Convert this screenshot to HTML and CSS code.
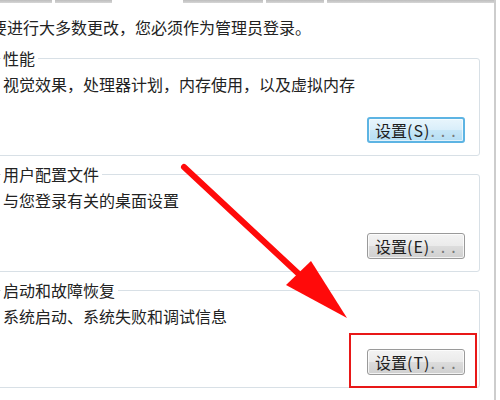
FILE: index.html
```html
<!DOCTYPE html>
<html lang="zh-CN">
<head>
<meta charset="utf-8">
<title>系统属性 - 高级</title>
<link rel="stylesheet" href="styles.css">
</head>
<body>
<div class="page">
  <div class="panel">
    <div class="tabs">
      <span class="tab w1"></span>
      <span class="tab w2"></span>
      <span class="tab sel"></span>
      <span class="tab w3"></span>
      <span class="tab w4"></span>
      <span class="tab w5"></span>
    </div>
    <p class="intro">要进行大多数更改，您必须作为管理员登录。</p>

    <fieldset class="group">
      <legend>性能</legend>
      <p class="desc">视觉效果，处理器计划，内存使用，以及虚拟内存</p>
      <div class="actions">
        <button class="btn focus">设置<span class="key">(S)</span><span class="dots">...</span></button>
      </div>
    </fieldset>

    <fieldset class="group">
      <legend>用户配置文件</legend>
      <p class="desc">与您登录有关的桌面设置</p>
      <div class="actions">
        <button class="btn">设置<span class="key">(E)</span><span class="dots">...</span></button>
      </div>
    </fieldset>

    <fieldset class="group">
      <legend>启动和故障恢复</legend>
      <p class="desc">系统启动、系统失败和调试信息</p>
      <div class="actions">
        <span class="callout"><button class="btn">设置<span class="key">(T)</span><span class="dots">...</span></button></span>
      </div>
    </fieldset>
  </div>

  <svg class="arrow" width="500" height="400" viewBox="0 0 500 400" aria-hidden="true">
    <line x1="184" y1="167" x2="302" y2="277" stroke="#ff0a0a" stroke-width="6" stroke-linecap="round"/>
    <polygon points="286,285 311,261 347,318" fill="#ff0a0a"/>
  </svg>
</div>
</body>
</html>
```

FILE: styles.css
```css
* { box-sizing: border-box; }

html, body {
  margin: 0;
  padding: 0;
  background: #ffffff;
}

.page {
  position: relative;
  width: 500px;
  height: 400px;
  overflow: hidden;
  background: #ffffff;
  font-family: "Noto Sans CJK SC", "Noto Sans", sans-serif;
  font-size: 16px;
  color: #222222;
}

.panel {
  margin-left: -10px;
  width: 506px;
  height: 400px;
  padding: 0 14px 0 0;
  border-right: 2px solid #cdcdcd;
}

.tabs {
  display: flex;
  height: 3px;
  margin: 0 -14px 0 10px;
  gap: 3px;
}

.tab {
  height: 3px;
  background: linear-gradient(#bdbdbd, #d6d6d6);
}

.tab.w1 { width: 52px; }
.tab.w2 { width: 57px; }
.tab.sel { width: 65px; background: transparent; }
.tab.w3 { width: 80px; }
.tab.w4 { width: 58px; }
.tab.w5 { flex: 1; }

.intro {
  margin: 14px 0 0 1px;
  line-height: 20px;
  white-space: nowrap;
}

.group {
  margin: 8px 0 0 0;
  min-width: 0;
  border: 1px solid #d8e0e6;
  border-radius: 3px;
  padding: 6px 14px 12px 12px;
}

.intro + .group { margin-top: 11px; }

.group legend {
  margin-left: -2px;
  padding: 0 3px 0 2px;
  line-height: 20px;
  white-space: nowrap;
}

.desc {
  margin: 0;
  line-height: 20px;
  white-space: nowrap;
}

.actions {
  display: flex;
  justify-content: flex-end;
  margin-top: 23px;
}

.btn {
  display: block;
  width: 98px;
  height: 26px;
  padding: 0 0 0 7px;
  text-align: left;
  font-family: "Noto Sans CJK SC", "Noto Sans", sans-serif;
  font-size: 16px;
  line-height: 22px;
  color: #1e1e1e;
  border: 1px solid #9a9a9a;
  border-radius: 3px;
  background: linear-gradient(#f3f3f3, #ebebeb 48%, #dcdcdc 52%, #d0d0d0);
  box-shadow: inset 0 0 0 1px rgba(255, 255, 255, 0.75);
  white-space: nowrap;
}

.btn.focus {
  border: 2px solid #5db4e3;
  padding-left: 6px;
  background: linear-gradient(#e8f5fc, #d9eefa 48%, #c6e6f7 52%, #b6def4);
  box-shadow: inset 0 0 0 1px rgba(255, 255, 255, 0.6);
}

.key {
  letter-spacing: 1px;
}

.dots {
  letter-spacing: 6px;
  color: #7a7a7a;
}

.callout {
  position: relative;
  display: block;
}

.callout::after {
  content: "";
  position: absolute;
  left: -18px;
  top: -16px;
  right: -12px;
  bottom: -13px;
  border: 2px solid #e81818;
}

.arrow {
  position: absolute;
  left: 0;
  top: 0;
  pointer-events: none;
}
```
